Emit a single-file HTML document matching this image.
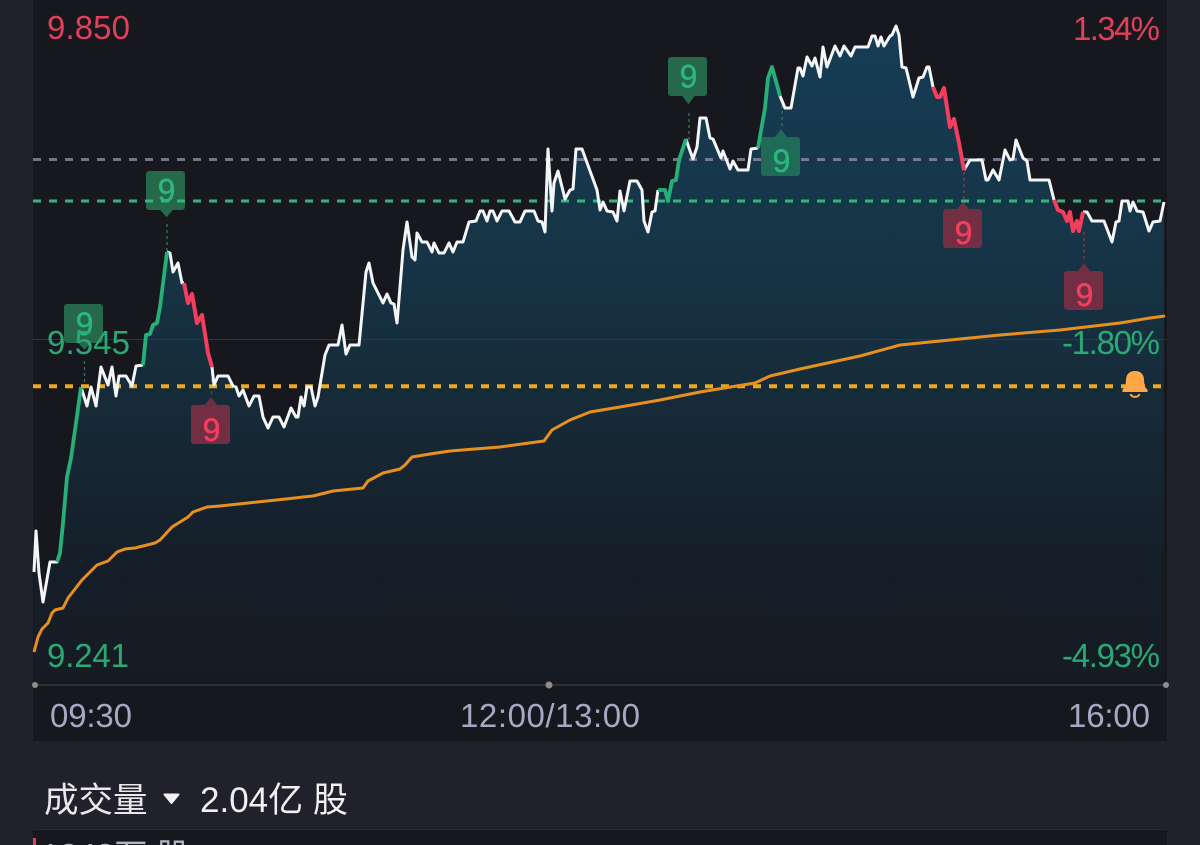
<!DOCTYPE html>
<html><head><meta charset="utf-8">
<style>
html,body{margin:0;padding:0;background:#20212b;width:1200px;height:845px;overflow:hidden}
svg{display:block;position:absolute;left:0;top:0}
text{font-family:"Liberation Sans","Noto Sans CJK SC",sans-serif}
</style></head>
<body>
<svg width="1200" height="845" viewBox="0 0 1200 845">
<defs>
<linearGradient id="g" gradientUnits="userSpaceOnUse" x1="0" y1="26" x2="0" y2="685">
<stop offset="0" stop-color="#153d55"/>
<stop offset="0.35" stop-color="#163446"/>
<stop offset="0.6" stop-color="#162936"/>
<stop offset="0.8" stop-color="#151f2a"/>
<stop offset="1" stop-color="#161b22"/>
</linearGradient>
</defs>
<rect width="1200" height="845" fill="#20212b"/>
<rect x="33" y="0" width="1134" height="741" fill="#17181d"/>
<rect x="33" y="830" width="1134" height="15" fill="#17181d"/>
<rect x="33" y="829" width="1134" height="1" fill="#2a2b35"/>

<path fill="url(#g)" d="M34,685V572L36,531L39,573L43,602L50,562L57,562L60,553L63,523L67,477L71,458L75,430L81,387L87,406L91,387L96,406L101,367L108,385L112,367L116,396L119,376L126,376L132,386L136,366L143,365L146,335L150,334L153,325L157,323L160,307L167,252L170,253L173,272L178,263L182,283L184,283L188,303L192,294L197,323L202,315L208,353L212,367L214,385L218,376L228,376L233,386L236,387L239,396L243,390L249,406L254,396L259,396L263,417L268,428L273,417L279,417L284,427L291,408L296,417L298,417L301,397L304,406L307,387L311,387L315,406L318,397L325,355L329,345L338,345L342,325L346,354L350,345L359,345L366,272L369,263L373,283L378,293L383,303L387,294L391,303L394,304L397,323L400,287L403,250L407,222L412,257L415,260L417,233L422,242L427,242L432,252L434,243L439,253L444,253L449,243L453,252L457,242L463,242L469,222L476,221L480,211L483,211L487,221L490,211L493,211L497,221L502,211L509,211L515,222L520,222L525,211L534,211L538,221L542,222L545,232L548,149L552,211L554,183L558,171L565,199L570,190L573,189L576,149L582,149L597,190L600,210L603,202L607,211L613,212L617,221L620,191L624,211L630,181L637,181L642,190L644,221L648,232L652,212L655,211L658,190L665,190L668,201L672,181L676,180L679,160L686,139L689,148L693,159L697,147L700,118L706,118L710,138L713,139L721,158L723,151L730,169L733,161L738,170L748,170L751,149L758,148L765,108L768,78L772,67L780,90L785,108L791,108L798,68L800,68L803,76L807,57L812,66L815,58L820,77L823,47L827,67L835,46L840,56L844,46L851,56L855,47L868,47L872,36L875,36L878,46L881,37L884,46L890,36L892,35L896,26L899,35L902,67L906,68L908,76L913,97L919,78L923,77L927,67L929,67L933,87L937,97L940,97L944,88L950,127L954,119L959,143L964,170L970,160L982,160L986,180L988,180L993,170L999,180L1005,150L1010,160L1013,159L1016,140L1023,158L1027,161L1030,180L1049,180L1054,200L1058,210L1063,212L1067,221L1070,212L1073,231L1077,221L1079,231L1083,212L1087,212L1092,221L1104,221L1112,242L1116,222L1119,221L1122,201L1128,201L1130,211L1133,202L1137,211L1143,212L1149,231L1153,222L1160,221L1164,202V685Z"/>

<!-- grid and axis -->
<rect x="33" y="339" width="1134" height="1" fill="#33363f"/>
<rect x="33" y="684" width="1134" height="2" fill="#2e3037"/>
<circle cx="35" cy="685" r="3" fill="#8c8c8c"/>
<circle cx="549" cy="685" r="3.5" fill="#8c8c8c"/>
<circle cx="1166" cy="685" r="3" fill="#8c8c8c"/>

<!-- tags under lines -->
<g fill="#25684a" stroke="#25684a" stroke-width="1" stroke-linejoin="round">
<path d="M67,304.500h33a2.500,2.500 0 0 1 2.500,2.500v33a2.500,2.500 0 0 1 -2.500,2.500h-9.500l-6,6.500l-6,-6.500h-11.500a2.500,2.500 0 0 1 -2.500,-2.500v-33a2.500,2.500 0 0 1 2.500,-2.500z"/>
<path d="M149,171.500h33a2.500,2.500 0 0 1 2.500,2.500v33a2.500,2.500 0 0 1 -2.500,2.500h-9.500l-6,7l-6,-7h-11.500a2.500,2.500 0 0 1 -2.500,-2.500v-33a2.500,2.500 0 0 1 2.500,-2.500z"/>
<path d="M671,57.500h33a2.500,2.500 0 0 1 2.500,2.500v33a2.500,2.500 0 0 1 -2.500,2.500h-9.500l-6,8l-6,-8h-11.500a2.500,2.500 0 0 1 -2.500,-2.500v-33a2.500,2.500 0 0 1 2.500,-2.500z"/>
</g>
<g fill="#722f43" stroke="#722f43" stroke-width="1" stroke-linejoin="round">
<path d="M194,405.500h11l6,-7.500l6,7.500h10a2.500,2.500 0 0 1 2.500,2.500v33a2.500,2.500 0 0 1 -2.500,2.500h-33a2.500,2.500 0 0 1 -2.500,-2.500v-33a2.500,2.500 0 0 1 2.500,-2.500z"/>
<path d="M946,209.500h11l6,-6.500l6,6.500h10a2.500,2.500 0 0 1 2.500,2.500v33a2.500,2.500 0 0 1 -2.500,2.500h-33a2.500,2.500 0 0 1 -2.500,-2.500v-33a2.500,2.500 0 0 1 2.500,-2.500z"/>
<path d="M1067,271.500h11l6,-7.500l6,7.500h10a2.500,2.500 0 0 1 2.500,2.500v33a2.500,2.500 0 0 1 -2.500,2.500h-33a2.500,2.500 0 0 1 -2.500,-2.500v-33a2.500,2.500 0 0 1 2.500,-2.500z"/>
</g>

<!-- marker stems -->
<g fill="none" stroke-width="1.3" stroke-dasharray="3 3">
<path stroke="#2a7a58" d="M84.500,361V386M167,224V251M689,113V140M782,105V129"/>
<path stroke="#8a3a50" d="M211.500,367V394M964,172V203M1084,232V260"/>
</g>

<!-- dashed levels -->
<path d="M33,159.500H1160" stroke="#7c7d96" stroke-opacity=".92" stroke-width="3" stroke-dasharray="8 8" fill="none"/>
<path d="M33,201H1164" stroke="#34b67c" stroke-width="3" stroke-dasharray="8 8" fill="none"/>
<path d="M33,386.300H1164" stroke="#edaa1c" stroke-width="4" stroke-dasharray="8 8" fill="none"/>

<!-- teal tag over level lines -->
<path fill="#1f6b58" stroke="#1f6b58" stroke-width="1" stroke-linejoin="round" d="M764,137.500h11l6,-7.500l6,7.500h10a2.500,2.500 0 0 1 2.500,2.500v33a2.500,2.500 0 0 1 -2.500,2.500h-33a2.500,2.500 0 0 1 -2.500,-2.500v-33a2.500,2.500 0 0 1 2.500,-2.500z"/>

<!-- average line -->
<path fill="none" stroke="#e8901f" stroke-width="3" stroke-linejoin="round" d="M34,652L38,637L42,629L48,623L52,613L55,610L63,608L68,598L82,580L97,565L108,561L117,552L125,549L135,548L155,543L160,540L172,527L188,517L193,512L207,507L220,506L295,498L303,497L313,496L333,491L363,488L368,481L383,473L400,469L405,465L412,457L430,454L450,451L500,447L544,441L552,430L570,420L590,412L620,407L660,400L700,392L755,383L770,376L800,369L860,356L900,345L950,340L1000,335L1060,330L1120,323L1150,318L1165,316"/>

<!-- price line -->
<path fill="none" stroke="#f4f5f6" stroke-width="3" stroke-linejoin="round" d="M34,572L36,531L39,573L43,602L50,562L57,562L60,553M81,387L87,406L91,387L96,406L101,367L108,385L112,367L116,396L119,376L126,376L132,386L136,366L143,365M167,252L170,253L173,272L178,263L182,283L184,283M212,367L214,385L218,376L228,376L233,386L236,387L239,396L243,390L249,406L254,396L259,396L263,417L268,428L273,417L279,417L284,427L291,408L296,417L298,417L301,397L304,406L307,387L311,387L315,406L318,397L325,355L329,345L338,345L342,325L346,354L350,345L359,345L366,272L369,263L373,283L378,293L383,303L387,294L391,303L394,304L397,323L400,287L403,250L407,222L412,257L415,260L417,233L422,242L427,242L432,252L434,243L439,253L444,253L449,243L453,252L457,242L463,242L469,222L476,221L480,211L483,211L487,221L490,211L493,211L497,221L502,211L509,211L515,222L520,222L525,211L534,211L538,221L542,222L545,232L548,149L552,211L554,183L558,171L565,199L570,190L573,189L576,149L582,149L597,190L600,210L603,202L607,211L613,212L617,221L620,191L624,211L630,181L637,181L642,190L644,221L648,232L652,212L655,211L658,190M686,139L689,148L693,159L697,147L700,118L706,118L710,138L713,139L721,158L723,151L730,169L733,161L738,170L748,170L751,149L758,148M780,96L785,108L791,108L798,68L800,68L803,76L807,57L812,66L815,58L820,77L823,47L827,67L835,46L840,56L844,46L851,56L855,47L868,47L872,36L875,36L878,46L881,37L884,46L890,36L892,35L896,26L899,35L902,67L906,68L908,76L913,97L919,78L923,77L927,67L929,67L933,87M964,170L970,160L982,160L986,180L988,180L993,170L999,180L1005,150L1010,160L1013,159L1016,140L1023,158L1027,161L1030,180L1049,180L1054,200M1083,212L1087,212L1092,221L1104,221L1112,242L1116,222L1119,221L1122,201L1128,201L1130,211L1133,202L1137,211L1143,212L1149,231L1153,222L1160,221L1164,202"/>
<path fill="none" stroke="#26b077" stroke-width="3.8" stroke-linejoin="round" d="M57,562L60,553L63,523L67,477L71,458L75,430L81,387M143,365L146,335L150,334L153,325L157,323L160,307L167,252M658,190L665,190L668,201L672,181L676,180L679,160L686,139M758,148L765,108L768,78L772,67L780,96"/>
<path fill="none" stroke="#f53d5e" stroke-width="4" stroke-linejoin="round" d="M184,283L188,303L192,294L197,323L202,315L208,353L212,367M933,87L937,97L940,97L944,88L950,127L954,119L959,143L964,170M1054,200L1058,210L1063,212L1067,221L1070,212L1073,231L1077,221L1079,231L1083,212"/>

<!-- tag digits -->
<g font-size="32" text-anchor="middle" stroke-width=".5">
<text x="84.500" y="335" fill="#2bb77c" stroke="#2bb77c">9</text>
<text x="166.500" y="201.500" fill="#2bb77c" stroke="#2bb77c">9</text>
<text x="688.500" y="87.500" fill="#2bb77c" stroke="#2bb77c">9</text>
<text x="781.500" y="172" fill="#2bb77c" stroke="#2bb77c">9</text>
<text x="211.500" y="441" fill="#f53d5e" stroke="#f53d5e">9</text>
<text x="963.500" y="244" fill="#f53d5e" stroke="#f53d5e">9</text>
<text x="1084.500" y="306" fill="#f53d5e" stroke="#f53d5e">9</text>
</g>

<!-- bell -->
<path fill="#ffa646" d="M1122.500,389.500c2,-1.500 3,-3 3.200,-6l.3,-4c.4,-5.500 3.500,-8.500 9,-8.500s8.600,3 9,8.500l.3,4c.2,3 1.200,4.500 3.200,6v2.500h-25z"/>
<path fill="none" stroke="#ffa646" stroke-width="2" d="M1130.500,394c1,3.800 8,3.800 9,0"/>

<!-- axis labels -->
<g font-size="33">
<text x="47" y="39" fill="#e0405a" textLength="83">9.850</text>
<text x="1073" y="40" fill="#e0405a" textLength="87">1.34%</text>
<text x="47" y="354" fill="#2ba874" textLength="83">9.545</text>
<text x="1062" y="354" fill="#2ba874" textLength="98">-1.80%</text>
<text x="47" y="667" fill="#2ba874" textLength="82">9.241</text>
<text x="1062" y="667" fill="#2ba874" textLength="98">-4.93%</text>
<text x="50" y="727" fill="#a6a9c6" textLength="82">09:30</text>
<text x="460" y="727" fill="#a6a9c6" textLength="180">12:00/13:00</text>
<text x="1068" y="727" fill="#a6a9c6" textLength="82">16:00</text>
</g>

<!-- volume header -->
<text x="44" y="812" font-size="34.500" fill="#e9e9ec">成交量</text>
<path d="M164.500,794.500h14l-7,8.500z" fill="#f2f2f2" stroke="#f2f2f2" stroke-width="2" stroke-linejoin="round"/>
<text x="200" y="812" font-size="35" fill="#f0f0f3">2.04亿 股</text>

<!-- clipped row -->
<rect x="33" y="838" width="3" height="7" fill="#e0405a"/>
<text x="41" y="867" font-size="33" fill="#b4b5c4">1243万 股</text>
</svg>
</body></html>
